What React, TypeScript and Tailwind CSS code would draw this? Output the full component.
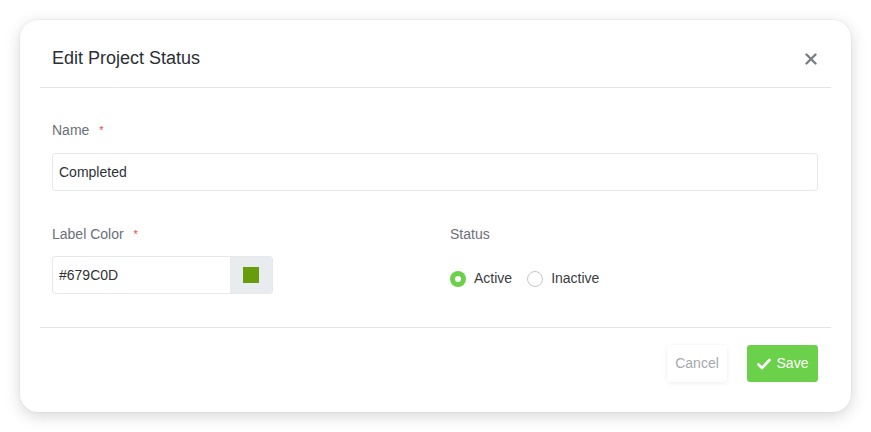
import React from "react";

export default function App() {
  return (
    <div className="w-[871px] h-[432px] bg-white pt-5 pl-5" style={{ fontFamily: '"Liberation Sans", Arial, sans-serif' }}>
      <div className="w-[831px] h-[392px] rounded-[18px] bg-white shadow-[0_4px_16px_rgba(0,0,0,0.16),0_0_0_1px_rgba(0,0,0,0.03)] flex flex-col">
        <div className="mx-5 h-[68px] pt-[10px] border-b border-[#e2e4e7] flex items-center justify-between pl-3 pr-[14px]">
          <h2 className="text-[18px] text-[#2b2f34]">Edit Project Status</h2>
          <svg width="12" height="12" viewBox="0 0 12 12" className="mt-[1px]">
            <path d="M1.5 1.5 L10.5 10.5 M10.5 1.5 L1.5 10.5" stroke="#7a7d81" strokeWidth="2.4" strokeLinecap="round" />
          </svg>
        </div>
        <div className="px-3 pt-[33px] h-[240px] border-b border-[#e2e4e7] mx-5">
          <div className="text-[14px] text-[#6b7079] leading-[18px]">
            Name <span className="text-[#ef4444] ml-[6px] align-top text-[11px]">*</span>
          </div>
          <div className="mt-[14px] h-[38px] w-[766px] border border-[#e6e8eb] rounded-[3px] flex items-center px-[6px] text-[14px] text-[#2f3237]">
            Completed
          </div>
          <div className="grid grid-cols-2 gap-x-[29px] mt-[34px]">
            <div>
              <div className="text-[14px] text-[#6b7079] leading-[18px]">
                Label Color <span className="text-[#ef4444] ml-[6px] align-top text-[11px]">*</span>
              </div>
              <div className="mt-[13px] h-[38px] w-[221px] border border-[#e6e8eb] rounded-[3px] flex">
                <div className="flex-1 flex items-center px-[6px] text-[14px] text-[#2f3237]">#679C0D</div>
                <div className="w-[42px] bg-[#e9ecef] flex items-center justify-center rounded-r-[3px]">
                  <div className="w-4 h-4 bg-[#679C0D]" />
                </div>
              </div>
            </div>
            <div>
              <div className="text-[14px] text-[#6b7079] leading-[18px]">Status</div>
              <div className="mt-[25px] flex items-center text-[14px] text-[#3a3d42]">
                <span className="w-4 h-4 rounded-full bg-[#6bd04a] flex items-center justify-center">
                  <span className="w-[6px] h-[6px] rounded-full bg-white" />
                </span>
                <span className="ml-2">Active</span>
                <span className="ml-[15px] w-4 h-4 rounded-full border border-[#c4c7cc] bg-white" />
                <span className="ml-2">Inactive</span>
              </div>
            </div>
          </div>
        </div>
        <div className="flex-1 flex items-start justify-end gap-5 pr-[33px] pt-[17px]">
          <button className="h-[37px] w-[60px] rounded-[3px] bg-white text-[14px] text-[#a5a9b0] shadow-[0_1px_4px_rgba(0,0,0,0.08)]">Cancel</button>
          <button className="h-[37px] w-[71px] rounded-[3px] bg-[#6bd04a] text-[14px] text-white flex items-center justify-center gap-[6px]">
            <svg width="14" height="12" viewBox="0 0 14 12">
              <path d="M1.5 6.5 L5 10 L12.5 2" fill="none" stroke="white" strokeWidth="2.6" strokeLinecap="round" strokeLinejoin="round" />
            </svg>
            Save
          </button>
        </div>
      </div>
    </div>
  );
}
